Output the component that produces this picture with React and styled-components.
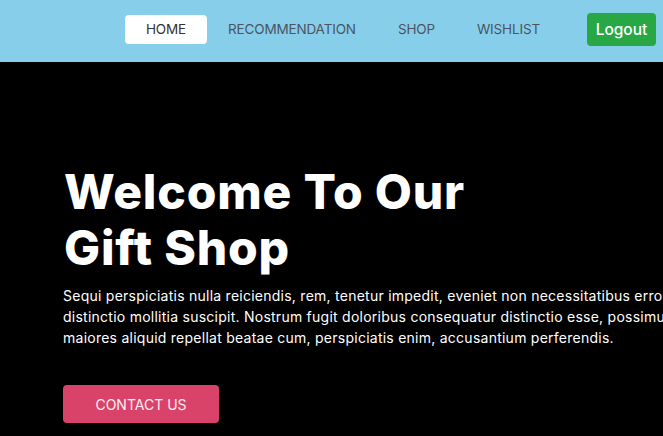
import React from "react";
import styled, { createGlobalStyle } from "styled-components";

const Global = createGlobalStyle`
  html, body { margin: 0; padding: 0; background: #000; overflow: hidden; }
  body { font-family: "Inter", "Noto Sans", sans-serif; }
  * { box-sizing: border-box; }
`;

const Page = styled.div`
  width: 663px;
  height: 436px;
  display: flex;
  flex-direction: column;
  background: #000;
  overflow: hidden;
`;

const NavBar = styled.nav`
  height: 62px;
  flex: none;
  background: #87ceeb;
  display: flex;
  align-items: center;
  justify-content: flex-end;
  padding: 0 7px 3px 0;
`;

const NavList = styled.ul`
  list-style: none;
  margin: 0 26px 0 0;
  padding: 0;
  display: flex;
  align-items: center;
`;

const NavLink = styled.a`
  display: block;
  height: 29px;
  line-height: 29px;
  padding: 0 21px;
  font-size: 13.5px;
  letter-spacing: -0.15px;
  color: ${(p) => (p.$active ? "#333" : "#4a5560")};
  background: ${(p) => (p.$active ? "#fff" : "transparent")};
  border-radius: 4px;
  text-decoration: none;
  text-transform: uppercase;
`;

const LogoutButton = styled.button`
  width: 69px;
  height: 33px;
  border: none;
  border-radius: 4px;
  background: #28a745;
  color: #fff;
  font-family: inherit;
  font-size: 15.5px;
  font-weight: 500;
  padding: 0;
`;

const Hero = styled.section`
  flex: 1;
  padding: 102px 0 0 64px;
  color: #fff;
`;

const Title = styled.h1`
  margin: 0;
  font-size: 48px;
  line-height: 56px;
  font-weight: 800;
  letter-spacing: 0.8px;
  color: #fff;
`;

const Lead = styled.p`
  margin: 9px 0 0 -1px;
  font-size: 14px;
  line-height: 21px;
  letter-spacing: 0.25px;
  white-space: nowrap;
  color: #fff;
`;

const Line = styled.span`
  display: block;
`;

const ContactButton = styled.button`
  margin-top: 37px;
  margin-left: -1px;
  width: 156px;
  height: 38px;
  border: none;
  border-radius: 4px;
  background: #d9436a;
  color: #fdeef2;
  font-family: inherit;
  font-size: 14px;
  text-transform: uppercase;
  padding: 0;
`;

export default function App() {
  return (
    <>
      <Global />
      <Page>
        <NavBar>
          <NavList>
            <li><NavLink $active>Home</NavLink></li>
            <li><NavLink>Recommendation</NavLink></li>
            <li><NavLink>Shop</NavLink></li>
            <li><NavLink>Wishlist</NavLink></li>
          </NavList>
          <LogoutButton>Logout</LogoutButton>
        </NavBar>
        <Hero>
          <Title>
            Welcome To Our
            <br />
            Gift Shop
          </Title>
          <Lead>
            <Line>Sequi perspiciatis nulla reiciendis, rem, tenetur impedit, eveniet non necessitatibus error</Line>
            <Line>distinctio mollitia suscipit. Nostrum fugit doloribus consequatur distinctio esse, possimus</Line>
            <Line>maiores aliquid repellat beatae cum, perspiciatis enim, accusantium perferendis.</Line>
          </Lead>
          <ContactButton>Contact Us</ContactButton>
        </Hero>
      </Page>
    </>
  );
}
